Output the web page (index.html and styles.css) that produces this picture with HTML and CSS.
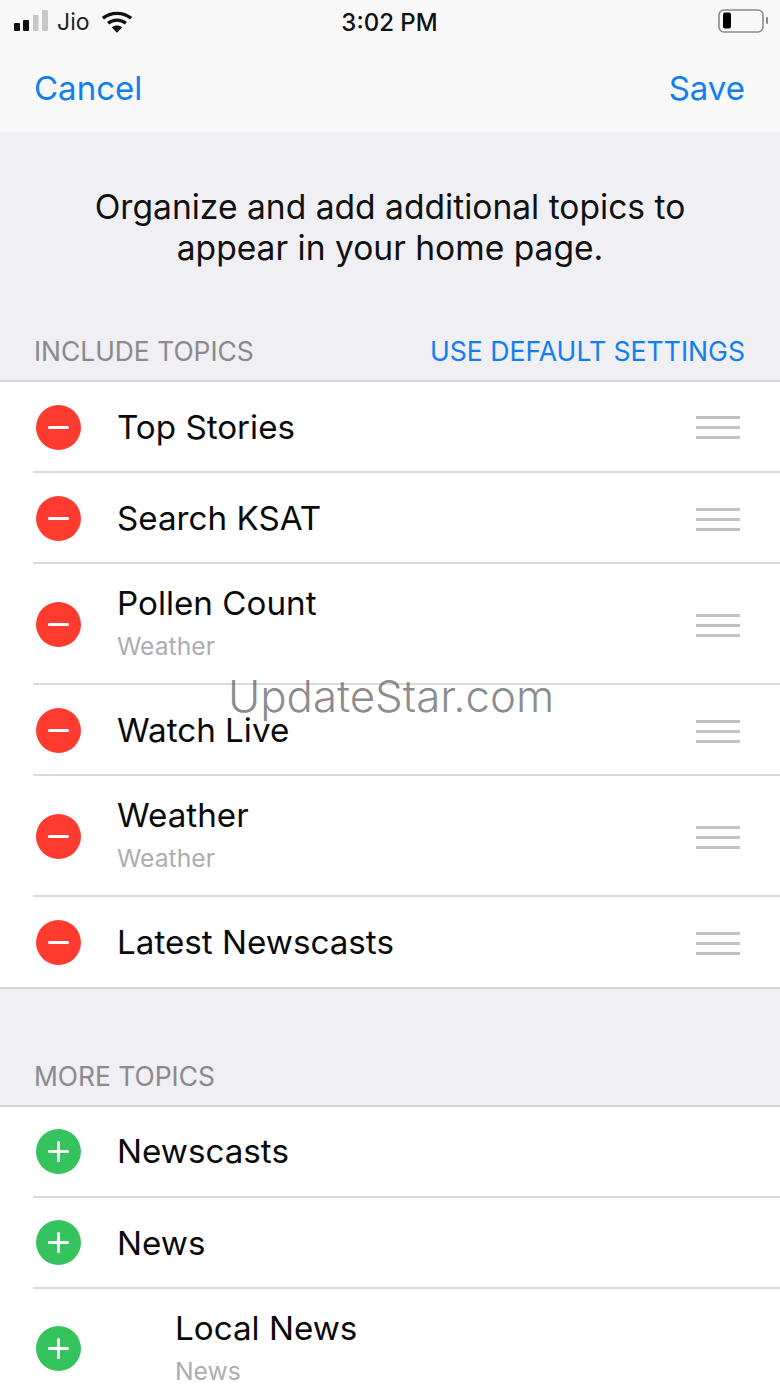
FILE: index.html
```html
<!DOCTYPE html>
<html lang="en">
<head>
    <meta charset="UTF-8">
    <meta name="viewport" content="width=device-width, initial-scale=1.0">
    <title>Topics</title>
    <link rel="stylesheet" href="styles.css">
</head>
<body>
    <div class="screen">
        <header class="top-bar">
            <div class="status-bar">
                <div class="status-left">
                    <svg class="signal" width="34" height="21" viewBox="0 0 34 21">
                        <rect x="0" y="13" width="6" height="8" rx="1" fill="#111"/>
                        <rect x="9" y="10" width="6" height="11" rx="1" fill="#111"/>
                        <rect x="19" y="5" width="5.500" height="16" rx="1" fill="#c8c8c8"/>
                        <rect x="28" y="0" width="6" height="21" rx="1" fill="#c8c8c8"/>
                    </svg>
                    <span class="carrier">Jio</span>
                    <svg class="wifi" width="30" height="23" viewBox="0 0 32 24">
                        <path d="M1 7.5C9.500 0.500 22.500 0.500 31 7.500" fill="none" stroke="#111" stroke-width="3.600"/>
                        <path d="M6.500 12.800C12 8.300 20 8.300 25.500 12.800" fill="none" stroke="#111" stroke-width="3.600"/>
                        <path d="M10.500 17.200L16 23L21.500 17.200C18.500 14.400 13.500 14.400 10.500 17.200Z" fill="#111"/>
                    </svg>
                </div>
                <div class="clock">3:02 PM</div>
                <div class="status-right">
                    <svg width="50" height="26" viewBox="0 0 50 26">
                        <rect x="1" y="1" width="44" height="22" rx="5" fill="none" stroke="#8a8a8a" stroke-width="1.600"/>
                        <rect x="5" y="3.500" width="8" height="16" rx="2" fill="#000"/>
                        <rect x="48" y="8" width="2" height="7" rx="1" fill="#8a8a8a"/>
                    </svg>
                </div>
            </div>
            <nav class="nav-bar">
                <a class="nav-link">Cancel</a>
                <a class="nav-link">Save</a>
            </nav>
        </header>

        <p class="intro">Organize and add additional topics to<br>appear in your home page.</p>

        <div class="section-head">
            <span class="section-title">INCLUDE TOPICS</span>
            <a class="section-action">USE DEFAULT SETTINGS</a>
        </div>
        <ul class="topic-list topic-list-included">
            <li class="topic-row">
                <span class="badge badge-remove"></span>
                <div class="topic-text"><div class="topic-name">Top Stories</div></div>
                <span class="grip"><i></i><i></i><i></i></span>
            </li>
            <li class="topic-row">
                <span class="badge badge-remove"></span>
                <div class="topic-text"><div class="topic-name">Search KSAT</div></div>
                <span class="grip"><i></i><i></i><i></i></span>
            </li>
            <li class="topic-row topic-row-tall">
                <span class="badge badge-remove"></span>
                <div class="topic-text">
                    <div class="topic-name">Pollen Count</div>
                    <div class="topic-sub">Weather</div>
                </div>
                <span class="grip"><i></i><i></i><i></i></span>
            </li>
            <li class="topic-row">
                <span class="badge badge-remove"></span>
                <div class="topic-text"><div class="topic-name">Watch Live</div></div>
                <span class="grip"><i></i><i></i><i></i></span>
            </li>
            <li class="topic-row topic-row-tall">
                <span class="badge badge-remove"></span>
                <div class="topic-text">
                    <div class="topic-name">Weather</div>
                    <div class="topic-sub">Weather</div>
                </div>
                <span class="grip"><i></i><i></i><i></i></span>
            </li>
            <li class="topic-row">
                <span class="badge badge-remove"></span>
                <div class="topic-text"><div class="topic-name">Latest Newscasts</div></div>
                <span class="grip"><i></i><i></i><i></i></span>
            </li>
        </ul>

        <div class="section-head section-head-more">
            <span class="section-title">MORE TOPICS</span>
        </div>
        <ul class="topic-list topic-list-open">
            <li class="topic-row">
                <span class="badge badge-add"></span>
                <div class="topic-text"><div class="topic-name">Newscasts</div></div>
            </li>
            <li class="topic-row">
                <span class="badge badge-add"></span>
                <div class="topic-text"><div class="topic-name">News</div></div>
            </li>
            <li class="topic-row topic-row-tall topic-row-child">
                <span class="badge badge-add"></span>
                <div class="topic-text">
                    <div class="topic-name">Local News</div>
                    <div class="topic-sub">News</div>
                </div>
            </li>
        </ul>

        <div class="watermark">UpdateStar.com</div>
    </div>
</body>
</html>
```

FILE: styles.css
```css
* {
    margin: 0;
    padding: 0;
    box-sizing: border-box;
    font-family: Inter, 'Liberation Sans', sans-serif;
}

body {
    background: #efeff4;
}

.screen {
    position: relative;
    width: 780px;
    height: 1387px;
    overflow: hidden;
    background: #efeff4;
}

.top-bar {
    height: 132px;
    background: #f8f8f8;
}

.status-bar {
    display: grid;
    grid-template-columns: 1fr auto 1fr;
    align-items: center;
    height: 44px;
    padding: 0 12px 0 14px;
}

.status-left {
    display: flex;
    align-items: center;
}

.signal {
    margin: -3px 9px 0 0;
}

.carrier {
    font-size: 23px;
    color: #222;
    margin-right: 12px;
}

.clock {
    font-size: 24px;
    font-weight: 500;
    color: #111;
    margin-right: 3px;
}

.status-right {
    display: flex;
    justify-content: flex-end;
}

.nav-bar {
    display: flex;
    justify-content: space-between;
    align-items: center;
    height: 88px;
    padding: 0 35px 0 34px;
}

.nav-link {
    font-size: 33px;
    color: #127ff0;
}

.intro {
    height: 190px;
    padding-top: 54px;
    text-align: center;
    font-size: 33.6px;
    line-height: 41px;
    color: #111;
}

.section-head {
    display: flex;
    justify-content: space-between;
    align-items: flex-end;
    height: 58px;
    padding: 0 35px 13px 34px;
    font-size: 26.6px;
}

.section-head-more {
    height: 116px;
}

.section-title {
    font-size: 26.4px;
    color: #8a8a8f;
}

.section-action {
    color: #127ff0;
}

.topic-list {
    list-style: none;
    background: #fff;
    border-top: 2px solid #d6d6da;
    border-bottom: 2px solid #d6d6da;
}

.topic-list-open {
    border-bottom: none;
}

.topic-row {
    display: flex;
    align-items: center;
    height: 91px;
    padding-left: 36px;
    position: relative;
}

.topic-row:first-child {
    height: 90px;
}

.topic-list-open .topic-row:first-child {
    padding-bottom: 2px;
}

.topic-row + .topic-row::before {
    content: "";
    position: absolute;
    top: -1px;
    left: 33px;
    right: 0;
    height: 2px;
    background: #d9d9dc;
}

.topic-row-tall {
    height: 121px;
}

.badge {
    position: relative;
    flex: none;
    width: 45px;
    height: 45px;
    border-radius: 50%;
}

.topic-list-included .topic-row + .topic-row .badge {
    margin-top: 2px;
}

.badge-remove {
    background: #ff3b30;
}

.badge-add {
    background: #34c35c;
}

.badge::before,
.badge-add::after {
    content: "";
    position: absolute;
    background: #fff;
    border-radius: 2px;
}

.badge::before {
    left: 12px;
    right: 12px;
    top: 21px;
    height: 3px;
}

.badge-add::after {
    top: 12px;
    bottom: 12px;
    left: 21px;
    width: 3px;
}

.topic-text {
    flex: 1;
    margin-left: 36px;
}

.topic-row-tall .topic-text {
    padding-bottom: 4px;
}

.topic-row-child .topic-text {
    margin-left: 94px;
}

.topic-name {
    font-size: 33.2px;
    line-height: 40px;
    color: #0a0a0a;
}

.topic-sub {
    margin-top: 8px;
    font-size: 24.7px;
    line-height: 30px;
    color: #adadb1;
}

.grip {
    display: flex;
    flex-direction: column;
    gap: 7px;
    width: 44px;
    margin-right: 40px;
}

.topic-row + .topic-row .grip {
    margin-top: 3px;
}

.grip i {
    display: block;
    height: 3px;
    background: #c2c2c4;
}

.watermark {
    position: absolute;
    top: 670px;
    left: 228px;
    font-size: 43.8px;
    line-height: 54px;
    color: rgba(110, 110, 110, 0.8);
    font-weight: 300;
}
```
